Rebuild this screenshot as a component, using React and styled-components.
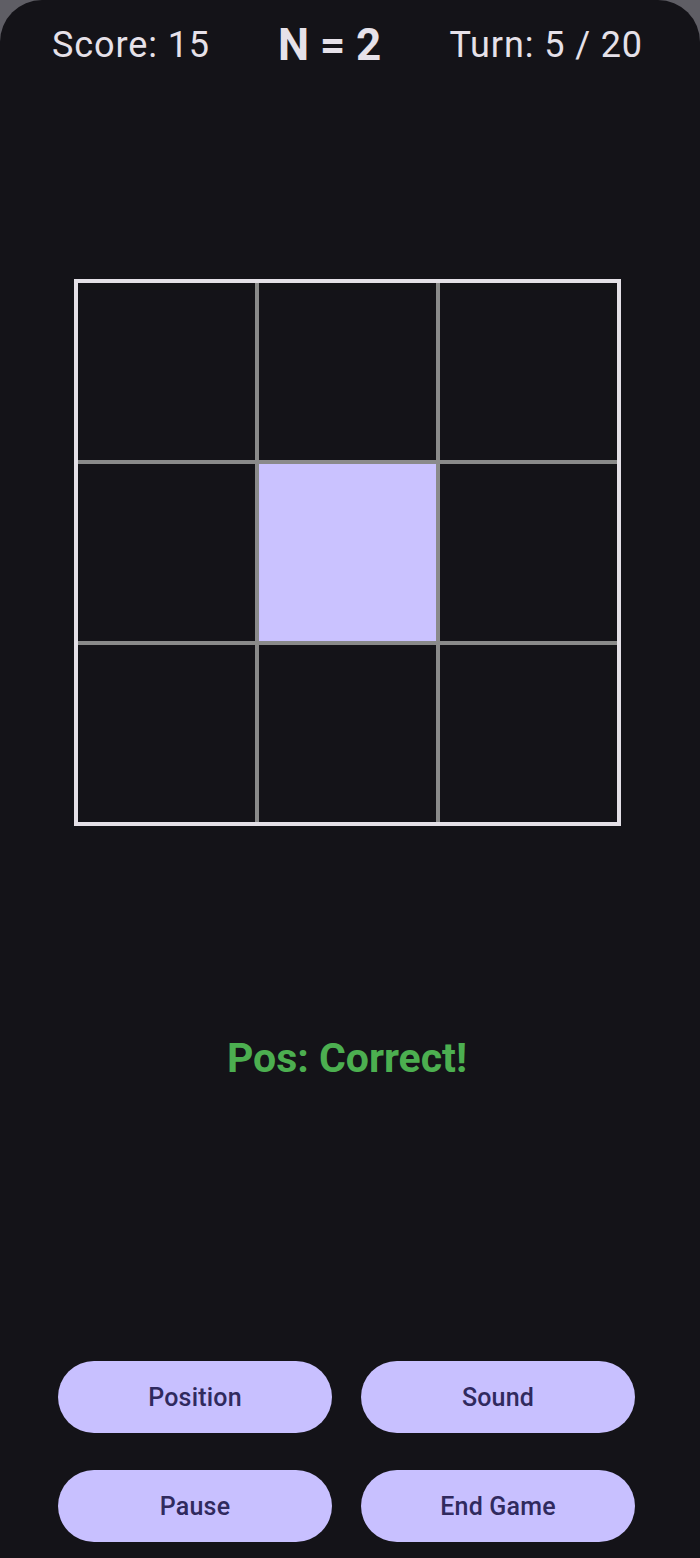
import React from "react";
import styled, { createGlobalStyle } from "styled-components";

const GRID_SIZE = 3;
const ACTIVE_CELL = 4;

const GlobalStyle = createGlobalStyle`
  html, body {
    margin: 0;
    padding: 0;
    background: #5f5e65;
  }
  * {
    box-sizing: border-box;
  }
`;

export default function App() {
  const cells = Array.from({ length: GRID_SIZE * GRID_SIZE }, (_, i) => i);

  return (
    <>
      <GlobalStyle />
      <Screen>
        <Header>
          <Stat>Score: 15</Stat>
          <Level>N = 2</Level>
          <Stat>Turn: 5 / 20</Stat>
        </Header>

        <Board>
          {cells.map((i) => (
            <Cell key={i} $active={i === ACTIVE_CELL} />
          ))}
        </Board>

        <Feedback>Pos: Correct!</Feedback>

        <Controls>
          <ActionButton>Position</ActionButton>
          <ActionButton>Sound</ActionButton>
          <ActionButton>Pause</ActionButton>
          <ActionButton>End Game</ActionButton>
        </Controls>
      </Screen>
    </>
  );
}

const Screen = styled.div`
  min-height: 1558px;
  background: #141318;
  border-radius: 42px 42px 0 0;
  display: flex;
  flex-direction: column;
  font-family: Roboto, "Noto Sans", sans-serif;
  overflow: hidden;
`;

const Header = styled.div`
  display: flex;
  align-items: center;
  justify-content: space-between;
  padding: 25px 57px 0 52px;
  height: 65px;
`;

const Stat = styled.span`
  font-size: 36px;
  line-height: 40px;
  color: #e6e1e9;
  letter-spacing: 0.9px;
`;

const Level = styled.span`
  font-size: 44px;
  line-height: 40px;
  font-weight: 700;
  color: #e6e1e9;
`;

const Board = styled.div`
  align-self: center;
  margin: 214px 6px 0 0;
  width: 547px;
  height: 547px;
  border: 4px solid #e4e0e7;
  background: #8a8a8a;
  display: grid;
  grid-template-columns: repeat(3, 1fr);
  grid-template-rows: repeat(3, 1fr);
  gap: 4px;
`;

const Cell = styled.div`
  background: ${(p) => (p.$active ? "#cac2ff" : "#141318")};
`;

const Feedback = styled.div`
  margin-top: 208px;
  margin-right: 6px;
  text-align: center;
  font-size: 41px;
  line-height: 48px;
  font-weight: 700;
  color: #4caf50;
`;

const Controls = styled.div`
  margin-top: 279px;
  padding: 0 65px 0 58px;
  display: grid;
  grid-template-columns: 1fr 1fr;
  column-gap: 29px;
  row-gap: 37px;
`;

const ActionButton = styled.button`
  height: 72px;
  border: none;
  border-radius: 36px;
  background: #c8c0ff;
  color: #302a5e;
  font-family: Roboto, "Noto Sans", sans-serif;
  font-size: 25px;
  font-weight: 500;
  letter-spacing: 0.2px;
  cursor: pointer;
`;
